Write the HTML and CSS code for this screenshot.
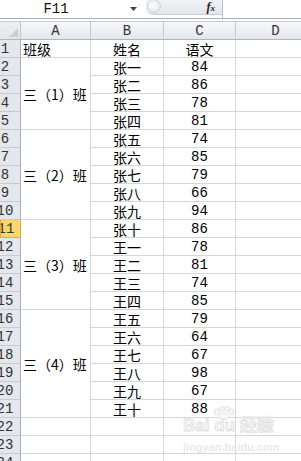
FILE: index.html
```html
<html>
  <head>
    <meta charset="utf-8">
    <link rel="stylesheet" href="styles.css">
  </head>
  <body>
    <div class="topbar">
      <div class="namebox">F11</div>
      <div class="dropdown"><svg width="8" height="5" viewBox="0 0 8 5"><path d="M0 0H7L3.5 4z" fill="#444"/></svg></div>
      <div class="fxbox"><span class="knob"></span><span class="fx">f<i>x</i></span></div>
      <div class="formula"></div>
    </div>
    <div class="sheet">
      <div class="corner"><span class="tri"></span></div>
      <div class="colhdr a">A</div>
      <div class="colhdr b">B</div>
      <div class="colhdr c">C</div>
      <div class="colhdr d">D</div>

      <div class="rh"><span>1</span></div><div class="cell a left">班级</div><div class="cell b">姓名</div><div class="cell c">语文</div><div class="cell d"></div>
      <div class="rh"><span>2</span></div><div class="cell a left span4">三（1）班</div><div class="cell b">张一</div><div class="cell c num">84</div><div class="cell d"></div>
      <div class="rh"><span>3</span></div><div class="cell b">张二</div><div class="cell c num">86</div><div class="cell d"></div>
      <div class="rh"><span>4</span></div><div class="cell b">张三</div><div class="cell c num">78</div><div class="cell d"></div>
      <div class="rh"><span>5</span></div><div class="cell b">张四</div><div class="cell c num">81</div><div class="cell d"></div>
      <div class="rh"><span>6</span></div><div class="cell a left span5">三（2）班</div><div class="cell b">张五</div><div class="cell c num">74</div><div class="cell d"></div>
      <div class="rh"><span>7</span></div><div class="cell b">张六</div><div class="cell c num">85</div><div class="cell d"></div>
      <div class="rh"><span>8</span></div><div class="cell b">张七</div><div class="cell c num">79</div><div class="cell d"></div>
      <div class="rh"><span>9</span></div><div class="cell b">张八</div><div class="cell c num">66</div><div class="cell d"></div>
      <div class="rh"><span>10</span></div><div class="cell b">张九</div><div class="cell c num">94</div><div class="cell d"></div>
      <div class="rh active"><span>11</span></div><div class="cell a left span5">三（3）班</div><div class="cell b">张十</div><div class="cell c num">86</div><div class="cell d"></div>
      <div class="rh"><span>12</span></div><div class="cell b">王一</div><div class="cell c num">78</div><div class="cell d"></div>
      <div class="rh"><span>13</span></div><div class="cell b">王二</div><div class="cell c num">81</div><div class="cell d"></div>
      <div class="rh"><span>14</span></div><div class="cell b">王三</div><div class="cell c num">74</div><div class="cell d"></div>
      <div class="rh"><span>15</span></div><div class="cell b">王四</div><div class="cell c num">85</div><div class="cell d"></div>
      <div class="rh"><span>16</span></div><div class="cell a left span6">三（4）班</div><div class="cell b">王五</div><div class="cell c num">79</div><div class="cell d"></div>
      <div class="rh"><span>17</span></div><div class="cell b">王六</div><div class="cell c num">64</div><div class="cell d"></div>
      <div class="rh"><span>18</span></div><div class="cell b">王七</div><div class="cell c num">67</div><div class="cell d"></div>
      <div class="rh"><span>19</span></div><div class="cell b">王八</div><div class="cell c num">98</div><div class="cell d"></div>
      <div class="rh"><span>20</span></div><div class="cell b">王九</div><div class="cell c num">67</div><div class="cell d"></div>
      <div class="rh"><span>21</span></div><div class="cell b">王十</div><div class="cell c num">88</div><div class="cell d"></div>
      <div class="rh"><span>22</span></div><div class="cell a"></div><div class="cell b"></div><div class="cell c"></div><div class="cell d"></div>
      <div class="rh"><span>23</span></div><div class="cell a"></div><div class="cell b"></div><div class="cell c"></div><div class="cell d"></div>
      <div class="rh"><span>24</span></div><div class="cell a"></div><div class="cell b"></div><div class="cell c"></div><div class="cell d"></div>
    </div>
    <div class="watermark">
      <svg class="paw" width="22" height="14" viewBox="0 0 22 14">
        <g fill="#f7f7f7" stroke="#e2e2e2" stroke-width="1">
          <ellipse cx="4" cy="6" rx="2.5" ry="3"/>
          <ellipse cx="9" cy="3" rx="2.5" ry="2.5"/>
          <ellipse cx="14" cy="3" rx="2.5" ry="2.5"/>
          <ellipse cx="18.5" cy="6" rx="2.5" ry="3"/>
          <ellipse cx="11" cy="10.5" rx="4.5" ry="3"/>
        </g>
      </svg>
      <div class="wm-logo">Bai du 经验</div>
      <div class="wm-url">jingyan.baidu.com</div>
    </div>
  </body>
</html>
```
FILE: styles.css
```css
body {
  margin: 0;
  width: 301px;
  height: 461px;
  overflow: hidden;
  background: #fff;
  font-family: "Noto Sans CJK SC", sans-serif;
  position: relative;
}

/* formula bar */
.topbar {
  display: flex;
  height: 18px;
  border-bottom: 1px solid #a9b0b8;
}
.namebox {
  width: 112px;
  font: 14px/18px "Liberation Mono", monospace;
  text-align: center;
  color: #111;
}
.dropdown {
  width: 30px;
  display: flex;
  align-items: center;
  justify-content: flex-end;
  padding-right: 4px;
  box-sizing: border-box;
}
.fxbox {
  margin-left: 4px;
  width: 76px;
  height: 15px;
  background: linear-gradient(#f1f3f6, #e2e6eb);
  border-radius: 0 0 0 8px;
  border-bottom: 1px solid #c9ced5;
  display: flex;
  align-items: center;
  justify-content: space-between;
  box-sizing: border-box;
}
.knob {
  width: 14px;
  height: 14px;
  margin-left: 1px;
  margin-top: -2px;
  border-radius: 50%;
  background: radial-gradient(circle at 40% 45%, #fbfcfd 0, #eef0f3 45%, #d6dae0 100%);
  border: 1px solid #cfd4da;
  box-sizing: border-box;
}
.fx {
  font: italic bold 12px "Liberation Serif", serif;
  color: #222;
  margin-right: 7px;
}
.fx i {
  font-size: 9px;
}
.formula {
  flex: 1;
  border-left: 1px solid #b9c0c8;
}

/* sheet */
.sheet {
  margin-top: 2px;
  display: grid;
  grid-template-columns: 21px 70px 73px 72px 80px;
  grid-template-rows: repeat(25, 18px);
  border-top: 1px solid #c7ccd2;
  font-size: 14px;
}
.sheet > div {
  box-sizing: border-box;
  border-right: 1px solid #d6d6d6;
  border-bottom: 1px solid #d6d6d6;
  display: flex;
  align-items: center;
  justify-content: center;
  overflow: hidden;
  white-space: nowrap;
  line-height: 16px;
}
.a { grid-column: 2; }
.b { grid-column: 3; }
.c { grid-column: 4; }
.d { grid-column: 5; }

.corner {
  grid-column: 1;
  background: linear-gradient(#eef0f3, #e2e5e9);
  position: relative;
}
.sheet > .corner,
.sheet > .colhdr {
  border-right-color: #c3c8cf;
  border-bottom-color: #aeb5be;
}
.tri {
  position: absolute;
  right: 2px;
  bottom: 2px;
  width: 0;
  height: 0;
  border-left: 9px solid transparent;
  border-bottom: 9px solid #c9ced5;
}
.colhdr {
  background: linear-gradient(#f7f8fa, #e3e6ea);
  font: 14px/16px "Liberation Mono", monospace;
  color: #333;
}

.sheet > .rh {
  grid-column: 1;
  background: #e4e7ec;
  border-right-color: #a9b0b9;
  border-bottom-color: #c6cbd2;
  justify-content: flex-start;
  font: 14px/16px "Liberation Mono", monospace;
  color: #333;
}
.rh span {
  width: 26px;
  margin-left: -8px;
  flex: none;
  text-align: center;
}
.sheet > .rh.active {
  background: #f9d76a;
  border: 1px solid #e5a93c;
  border-top: none;
}

.cell {
  color: #000;
}
.sheet > .left {
  justify-content: flex-start;
  padding-left: 2px;
}
.num {
  font: 14px/16px "Liberation Mono", monospace;
}
.span4 { grid-row: span 4; }
.span5 { grid-row: span 5; }
.span6 { grid-row: span 6; }

/* faint site watermark over the empty rows */
.watermark {
  position: absolute;
  left: 180px;
  top: 405px;
  width: 96px;
  pointer-events: none;
  white-space: nowrap;
}
.paw {
  position: absolute;
  left: 33px;
  top: 1px;
}
.wm-logo {
  position: absolute;
  left: 3px;
  top: 11px;
  font: bold 17px/20px "Liberation Sans", "Noto Sans CJK SC", sans-serif;
  color: #f8f8f8;
  -webkit-text-stroke: 0.8px #e0e0e0;
}
.wm-url {
  position: absolute;
  left: 3px;
  top: 36px;
  font: bold 11px/12px "Liberation Sans", sans-serif;
  color: #e9e9e9;
}
```
